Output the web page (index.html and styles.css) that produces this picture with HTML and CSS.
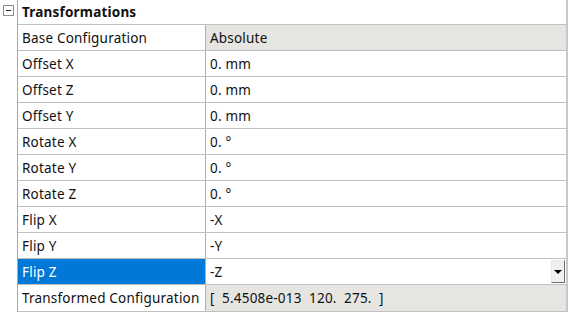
FILE: index.html
```html
<!DOCTYPE html>
<html lang="en">
<head>
    <meta charset="UTF-8">
    <meta name="viewport" content="width=device-width, initial-scale=1.0">
    <title>Transformations</title>
    <link rel="stylesheet" href="styles.css">
</head>
<body>

    <div class="panel">
        <div class="group-header">
            <div class="gutter">
                <span class="toggle"><span class="minus"></span></span>
            </div>
            <div class="group-title">Transformations</div>
        </div>
        <div class="group-body">
            <div class="gutter"></div>
            <div class="rows">
                <div class="row">
                    <div class="label">Base Configuration</div>
                    <div class="value readonly">Absolute</div>
                </div>
                <div class="row">
                    <div class="label">Offset X</div>
                    <div class="value">0. mm</div>
                </div>
                <div class="row">
                    <div class="label">Offset Z</div>
                    <div class="value">0. mm</div>
                </div>
                <div class="row">
                    <div class="label">Offset Y</div>
                    <div class="value">0. mm</div>
                </div>
                <div class="row">
                    <div class="label">Rotate X</div>
                    <div class="value">0. °</div>
                </div>
                <div class="row">
                    <div class="label">Rotate Y</div>
                    <div class="value">0. °</div>
                </div>
                <div class="row">
                    <div class="label">Rotate Z</div>
                    <div class="value">0. °</div>
                </div>
                <div class="row">
                    <div class="label">Flip X</div>
                    <div class="value">-X</div>
                </div>
                <div class="row">
                    <div class="label">Flip Y</div>
                    <div class="value">-Y</div>
                </div>
                <div class="row selected">
                    <div class="label">Flip Z</div>
                    <div class="value combo">
                        <span>-Z</span>
                        <span class="drop-btn"><span class="arrow"></span></span>
                    </div>
                </div>
                <div class="row last">
                    <div class="label">Transformed Configuration</div>
                    <div class="value readonly">[ &nbsp;5.4508e-013 &nbsp;120. &nbsp;275. &nbsp;]</div>
                </div>
            </div>
        </div>
    </div>

</body>
</html>
```

FILE: styles.css
```css
body {
    margin: 0;
    padding: 0;
    background-color: white;
    font-family: "Noto Sans", "Open Sans", sans-serif;
    font-size: 13.5px;
    letter-spacing: 0.2px;
    color: #111;
}
.panel {
    width: 566px;
    border-right: 2px solid #c8c8c8;
}
.group-header {
    display: flex;
    height: 25px;
}
.group-header .group-title {
    flex: 1;
    font-weight: bold;
    padding-left: 4px;
    line-height: 24px;
    border-bottom: 1px solid #c0c0c0;
}
.gutter {
    width: 17px;
    flex-shrink: 0;
    border-right: 1px solid #a8a8a8;
}
.toggle {
    display: flex;
    justify-content: center;
    align-items: center;
    width: 9px;
    height: 9px;
    margin: 5px 0 0 3px;
    border: 1px solid #8c8c8c;
}
.minus {
    width: 5px;
    height: 1px;
    background-color: #222;
}
.group-body {
    display: flex;
}
.rows {
    flex: 1;
}
.row {
    display: flex;
    height: 25px;
    border-bottom: 1px solid #c0c0c0;
}
.row.last {
    height: 26px;
}
.label {
    width: 183px;
    padding: 1px 0 0 4px;
    line-height: 24px;
    border-right: 1px solid #b0b0b0;
    white-space: nowrap;
}
.value {
    flex: 1;
    padding: 1px 0 0 4px;
    line-height: 24px;
    white-space: nowrap;
}
.value.readonly {
    background-color: #e6e5e2;
}
.row.selected .label {
    background-color: #0078d7;
    color: white;
}
.combo {
    display: flex;
    justify-content: space-between;
    align-items: center;
    padding-top: 0;
}
.drop-btn {
    display: flex;
    justify-content: center;
    align-items: center;
    width: 12px;
    height: 21px;
    margin-right: 1px;
    background-color: #f0f0f0;
    border-top: 1px solid #e8e8e8;
    border-left: 1px solid #e8e8e8;
    border-right: 1px solid #6a6a6a;
    border-bottom: 1px solid #6a6a6a;
}
.arrow {
    width: 0;
    height: 0;
    border-left: 4px solid transparent;
    border-right: 4px solid transparent;
    border-top: 4px solid #000;
}
```
